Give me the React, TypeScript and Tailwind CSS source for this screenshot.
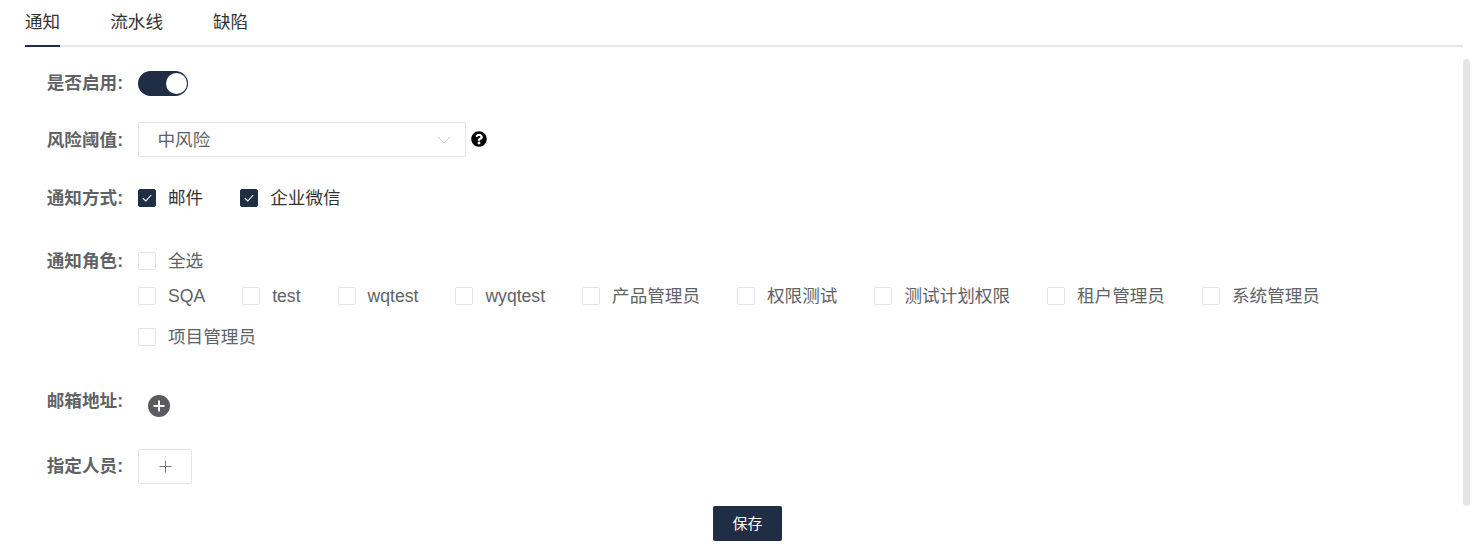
import React from "react";
import { FaQuestionCircle } from "react-icons/fa";

function Check({ checked, label, className = "" }: { checked?: boolean; label: string; className?: string }) {
  return (
    <label className={"flex items-center h-[18px] " + className}>
      <span
        className={
          "flex items-center justify-center w-[18px] h-[18px] rounded-[2px] border " +
          (checked ? "bg-[#1f2d45] border-[#1f2d45]" : "bg-white border-[#e2e3ec]")
        }
      >
        {checked && (
          <svg width="12" height="12" viewBox="0 0 12 12" fill="none">
            <path d="M1.8 6.2 4.8 9 10.2 3" stroke="#fff" strokeWidth="1.1" />
          </svg>
        )}
      </span>
      <span className={"ml-3 whitespace-nowrap " + (checked ? "text-[#333]" : "text-[#606266]")}>{label}</span>
    </label>
  );
}

function Label({ children, className = "" }: { children: React.ReactNode; className?: string }) {
  return (
    <div className={"w-[98px] shrink-0 mr-[15px] text-right font-bold text-[#606266] text-[17.6px] leading-[24px] whitespace-nowrap " + className}>
      {children}
    </div>
  );
}

const roles: [string, string][] = [
  ["SQA", "mr-[37px]"],
  ["test", "mr-[37px]"],
  ["wqtest", "mr-[37px]"],
  ["wyqtest", "mr-[37px]"],
  ["产品管理员", "mr-[37px]"],
  ["权限测试", "mr-[37px]"],
  ["测试计划权限", "mr-[37px]"],
  ["租户管理员", "mr-[37px]"],
  ["系统管理员", ""],
];

export default function App() {
  return (
    <div
      className="relative w-[1477px] h-[559px] overflow-hidden bg-white text-[17.6px] text-[#333] pl-[25px]"
      style={{ fontFamily: '"Liberation Sans", "Noto Sans CJK SC", sans-serif' }}
    >
      <div className="w-[1438px] h-[47px] flex border-b-2 border-[#e4e7ed] text-[#333]">
        <div className="relative w-[35.2px] pt-[9px] leading-[26px] whitespace-nowrap">
          通知
          <div className="absolute left-0 right-0 bottom-[-2px] h-[2px] bg-[#1f2d45]" />
        </div>
        <div className="ml-[50px] pt-[9px] leading-[26px]">流水线</div>
        <div className="ml-[50px] pt-[9px] leading-[26px]">缺陷</div>
      </div>

      <div className="w-[1438px] flex flex-col">
        <div className="flex items-center mt-[24px] h-[25px]">
          <Label className="-mt-[2px]">是否启用:</Label>
          <div className="relative w-[50px] h-[25px] rounded-full bg-[#1f2d45]">
            <div className="absolute right-[1.5px] top-[2px] w-[21px] h-[21px] rounded-full bg-white" />
          </div>
        </div>

        <div className="flex items-center mt-[26px] h-[35px]">
          <Label>风险阈值:</Label>
          <div className="flex items-center justify-between w-[328px] h-[35px] border border-[#e2e3ec] rounded-[2px] pl-[19px] pr-[14px] text-[#606266]">
            <span className="mt-[1px] -ml-[0.5px]">中风险</span>
            <svg width="14" height="8" viewBox="0 0 14 8" fill="none">
              <path d="M1 1l6 6 6-6" stroke="#c8ccd6" strokeWidth="1" />
            </svg>
          </div>
          <FaQuestionCircle className="ml-[5px] -mt-[2px] w-[16px] h-[16px] text-black" />
        </div>

        <div className="flex items-center mt-[32px] h-[18px]">
          <Label>通知方式:</Label>
          <Check checked label="邮件" className="mr-[37px]" />
          <Check checked label="企业微信" />
        </div>

        <div className="flex items-center mt-[45px] h-[18px]">
          <Label>通知角色:</Label>
          <Check label="全选" />
        </div>
        <div className="flex items-center mt-[17px] h-[18px] pl-[113px]">
          {roles.map(([r, c]) => (
            <Check key={r} label={r} className={c} />
          ))}
        </div>
        <div className="flex items-center mt-[23px] h-[18px] pl-[113px]">
          <Check label="项目管理员" />
        </div>

        <div className="flex mt-[44px] h-[27px]">
          <Label className="-mt-[1px]">邮箱地址:</Label>
          <svg className="ml-[10px] mt-[5px]" width="22" height="22" viewBox="0 0 22 22">
            <circle cx="11" cy="11" r="11" fill="#5b5b5f" />
            <path d="M11 5.5v11M5.5 11h11" stroke="#fff" strokeWidth="2" />
          </svg>
        </div>

        <div className="flex items-center mt-[32px] h-[35px]">
          <Label className="-mt-[2px]">指定人员:</Label>
          <div className="flex items-center justify-center w-[54px] h-[35px] border border-[#e2e3ec] rounded-[2px]">
            <svg width="13" height="13" viewBox="0 0 13 13">
              <path d="M6.5 0.5v12M0.5 6.5h12" stroke="#777" strokeWidth="1" />
            </svg>
          </div>
        </div>

        <div className="flex justify-center mt-[22px] pl-[7px]">
          <button className="w-[69px] h-[35px] rounded-[2px] bg-[#1f2d45] text-white text-[15px]">
            <span className="relative top-[1px]">保存</span>
          </button>
        </div>
      </div>

      <div className="absolute left-[1463px] top-[59px] w-[7px] h-[447px] rounded-full bg-[#e5e5e5]" />
    </div>
  );
}
